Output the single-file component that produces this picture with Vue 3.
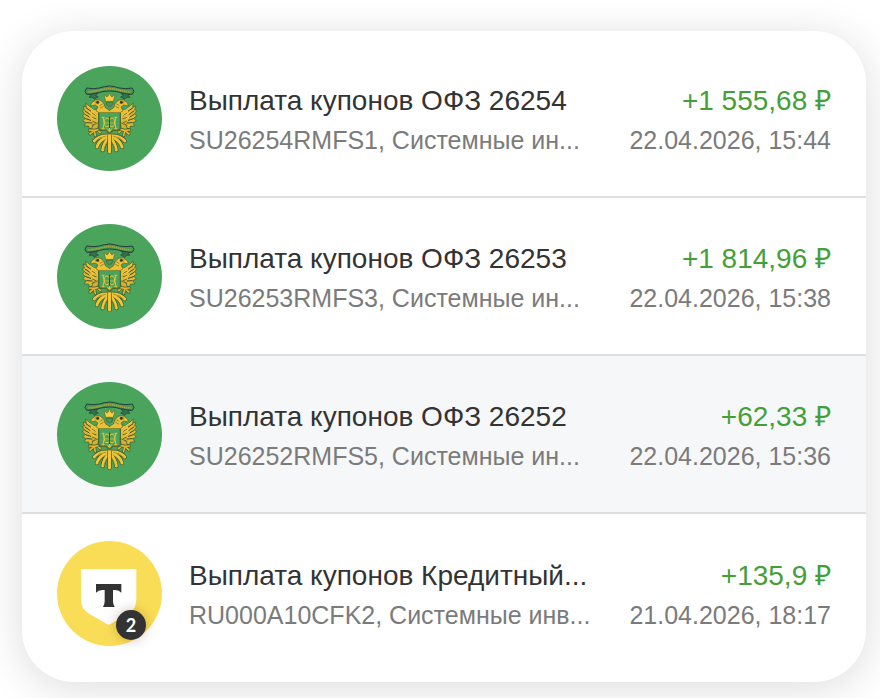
<script setup>
const payments = [
  { id: 1, kind: 'bond', title: 'Выплата купонов ОФЗ 26254', details: 'SU26254RMFS1, Системные ин...', amount: '+1 555,68 ₽', date: '22.04.2026, 15:44' },
  { id: 2, kind: 'bond', title: 'Выплата купонов ОФЗ 26253', details: 'SU26253RMFS3, Системные ин...', amount: '+1 814,96 ₽', date: '22.04.2026, 15:38' },
  { id: 3, kind: 'bond', title: 'Выплата купонов ОФЗ 26252', details: 'SU26252RMFS5, Системные ин...', amount: '+62,33 ₽', date: '22.04.2026, 15:36', active: true },
  { id: 4, kind: 'bank', title: 'Выплата купонов Кредитный...', details: 'RU000A10CFK2, Системные инв...', amount: '+135,9 ₽', date: '21.04.2026, 18:17', count: 2 },
]
const sides = ['', 'translate(357 0) scale(-1 1)']
</script>

<template>
  <main class="page">
    <ul class="card">
      <li v-for="item in payments" :key="item.id" class="row" :class="{ active: item.active }">
        <div class="avatar" :class="item.kind">
          <svg v-if="item.kind === 'bond'" class="logo" viewBox="21 18 315 315" aria-hidden="true">
            <g v-for="side in sides" :key="side" :transform="side" stroke-linejoin="round" stroke-linecap="round">
              <!-- tail feathers -->
              <g fill="none">
                <path d="M172 228 Q146 227 133 243 M173 231 Q147 240 141 261 M176 234 Q161 250 158 270" stroke="#3c5a31" stroke-width="13" />
                <path d="M172 228 Q146 227 133 243 M173 231 Q147 240 141 261 M176 234 Q161 250 158 270" stroke="#f0c536" stroke-width="9" />
                <path d="M166 229 Q146 231 137 243 M167 237 Q150 247 146 260 M173 243 Q165 254 162 268" stroke="#7d7a2f" stroke-width="2" />
              </g>
              <!-- wing -->
              <path d="M146 144 L132 150 L121 142 L107 129 L109 142 L99 138 L103 149 L97 152 L104 162 L97 167 L106 175 L98 183 L109 188 L102 198 L116 198 L118 206 L130 204 L148 203 Z" fill="#e0b834" stroke="#3e5a31" stroke-width="2" />
              <path d="M109 144 L122 153 M105 153 L120 163 M106 164 L120 172 M107 176 L122 181 M111 188 L126 189" fill="none" stroke="#3a4a2b" stroke-width="3" />
              <path d="M127 160 L138 166 M126 173 L138 176 M128 184 L138 188 M126 196 L134 192" fill="none" stroke="#6d692d" stroke-width="3" />
              <path d="M112 138 L142 158 M118 158 L130 166 M118 170 L130 177 M124 153 L142 168" fill="none" stroke="#fbd03b" stroke-width="3" />
              <!-- neck and head -->
              <path d="M178 159 L148 159 L138 152 L144 141 L136 135 L122 138 L124 129 L136 120 L150 120 L161 129 L166 143 L178 151 Z" fill="#eec036" stroke="#4c5f2f" stroke-width="2" />
              <path d="M133 124 L144 122 L150 128 L144 133 L135 130 Z" fill="#b5982f" />
              <circle cx="143" cy="127" r="4" fill="#25392f" />
              <path d="M150 136 L157 132 M151 144 L160 139" stroke="#6b682d" stroke-width="2" />
              <!-- leg and claw -->
              <path d="M145 188 L129 195 L125 207 L136 212 L148 210 L156 217 L150 222 L143 215 Z" fill="#d6ae33" stroke="#3e5a31" stroke-width="2" />
              <path d="M147 208 L133 211 L118 210 M133 211 L120 222 M133 212 L136 227" fill="none" stroke="#3e5a31" stroke-width="9" />
              <path d="M147 208 L133 211 L118 210 M133 211 L120 222 M133 212 L136 227" fill="none" stroke="#e0b634" stroke-width="5" />
              <!-- ribbon ends -->
              <path d="M114 102 L123 106 L117 112 L127 112 L133 118 L145 111 L137 106 L144 100 Z" fill="#35714a" stroke="#263f39" stroke-width="2" />
            </g>
            <path d="M178.500 228 V276" stroke="#3c5a31" stroke-width="13" stroke-linecap="round" />
            <path d="M178.500 226 V276" stroke="#f3c637" stroke-width="9" stroke-linecap="round" />
            <!-- shield -->
            <path d="M146 156 H211 V203 Q211 211 202 211 H189 L178.500 221 L168 211 H155 Q146 211 146 203 Z" fill="#4aa45c" stroke="#4d6a31" stroke-width="4" />
            <path d="M144 155 H213" stroke="#e8bd32" stroke-width="4" />
            <g fill="none" stroke="#ecc138" stroke-width="3">
              <path d="M155 172 H164 M193 172 H202 M159 172 Q166 188 159 206 M198 172 Q191 188 198 206 M155 206 H164 M193 206 H202" />
              <ellipse cx="171" cy="187" rx="8" ry="13" />
              <ellipse cx="186" cy="187" rx="8" ry="13" />
              <path d="M161 189 H196" stroke-width="2" />
              <path d="M172 206 L178.500 215 L185 206 M178.500 200 V213" />
            </g>
            <path d="M178.500 170 V204" stroke="#2d4d32" stroke-width="3" />
            <!-- crown -->
            <path d="M167 124 L162 103 L171 111 L174 109 L178.500 98 L183 109 L186 111 L195 103 L190 124 Z" fill="#f9d03c" stroke="#6a682d" stroke-width="2" />
            <path d="M168 127 H189 L186 136 L178.500 141 L171 136 Z" fill="#43985a" stroke="#4c5f2f" stroke-width="2" />
            <!-- motto ribbon -->
            <path d="M110 84 Q130 88 148 84 Q164 79 178.500 78 Q193 79 209 84 Q227 88 247 84 L252 94 L247 103 Q228 102 212 98 Q194 93 178.500 93 Q163 93 145 98 Q129 102 110 103 L105 94 Z" fill="#43985a" stroke="#263f39" stroke-width="3" stroke-linejoin="round" />
            <path d="M115 96 Q131 95 147 91 Q163 86 178.500 86 Q194 86 210 91 Q226 95 242 96" fill="none" stroke="#a9a63d" stroke-width="5" stroke-dasharray="4 2" />
          </svg>
          <svg v-else class="logo" viewBox="21 18 315 315" aria-hidden="true">
            <path d="M93 102 H259 V193 Q259 223 235 236 L176 270 L117 236 Q93 223 93 193 Z" fill="#fff" />
            <path d="M138 147 H214 V173 Q207 165 196 165 H189 V199 Q189 209 194 216 H159 Q164 209 164 199 V165 H157 Q145 165 138 173 Z" fill="#333" />
          </svg>
          <span v-if="item.count" class="badge">{{ item.count }}</span>
        </div>
        <div class="info">
          <div class="title">{{ item.title }}</div>
          <div class="sub">{{ item.details }}</div>
        </div>
        <div class="sum">
          <div class="amount">{{ item.amount }}</div>
          <div class="sub">{{ item.date }}</div>
        </div>
      </li>
    </ul>
  </main>
</template>

<style>
body {
  margin: 0;
  background: #fff;
}
</style>

<style scoped>
.page {
  padding: 31px 14px 16px 22px;
  overflow: hidden;
  font-family: "Liberation Sans", Arial, sans-serif;
  color: #333;
}
.card {
  margin: 0;
  padding: 9px 0 10px;
  list-style: none;
  background: #fff;
  border-radius: 52px;
  box-shadow: 0 6px 44px rgba(0, 0, 0, 0.14);
}
.row {
  display: flex;
  align-items: center;
  padding: 26px 35px 25px;
  border-bottom: 2px solid #dddfe0;
}
.row:last-child {
  padding-top: 27px;
  padding-bottom: 26px;
  border-bottom: 0;
}
.row.active {
  background: #f6f7f9;
}
.avatar {
  position: relative;
  flex: none;
  width: 105px;
  height: 105px;
  margin-right: 27px;
  border-radius: 50%;
}
.bond {
  background: #4aa45c;
}
.bank {
  background: #fadd57;
}
.logo {
  display: block;
  width: 100%;
  height: 100%;
}
.badge {
  position: absolute;
  right: 16px;
  bottom: 6px;
  width: 30px;
  height: 30px;
  border-radius: 50%;
  background: #333;
  box-shadow: 0 0 12px rgba(90, 50, 0, 0.3);
  color: #fff;
  font: 700 18px/30px Lato, sans-serif;
  text-align: center;
}
.info {
  flex: 1;
  min-width: 0;
  padding-top: 2px;
}
.sum {
  flex: none;
  padding-top: 2px;
  text-align: right;
}
.title,
.amount {
  font-size: 28px;
  line-height: 40px;
  white-space: nowrap;
}
.amount {
  color: #459f39;
}
.sub {
  font-size: 25px;
  line-height: 38px;
  color: #7b7b7b;
  white-space: nowrap;
}
</style>
